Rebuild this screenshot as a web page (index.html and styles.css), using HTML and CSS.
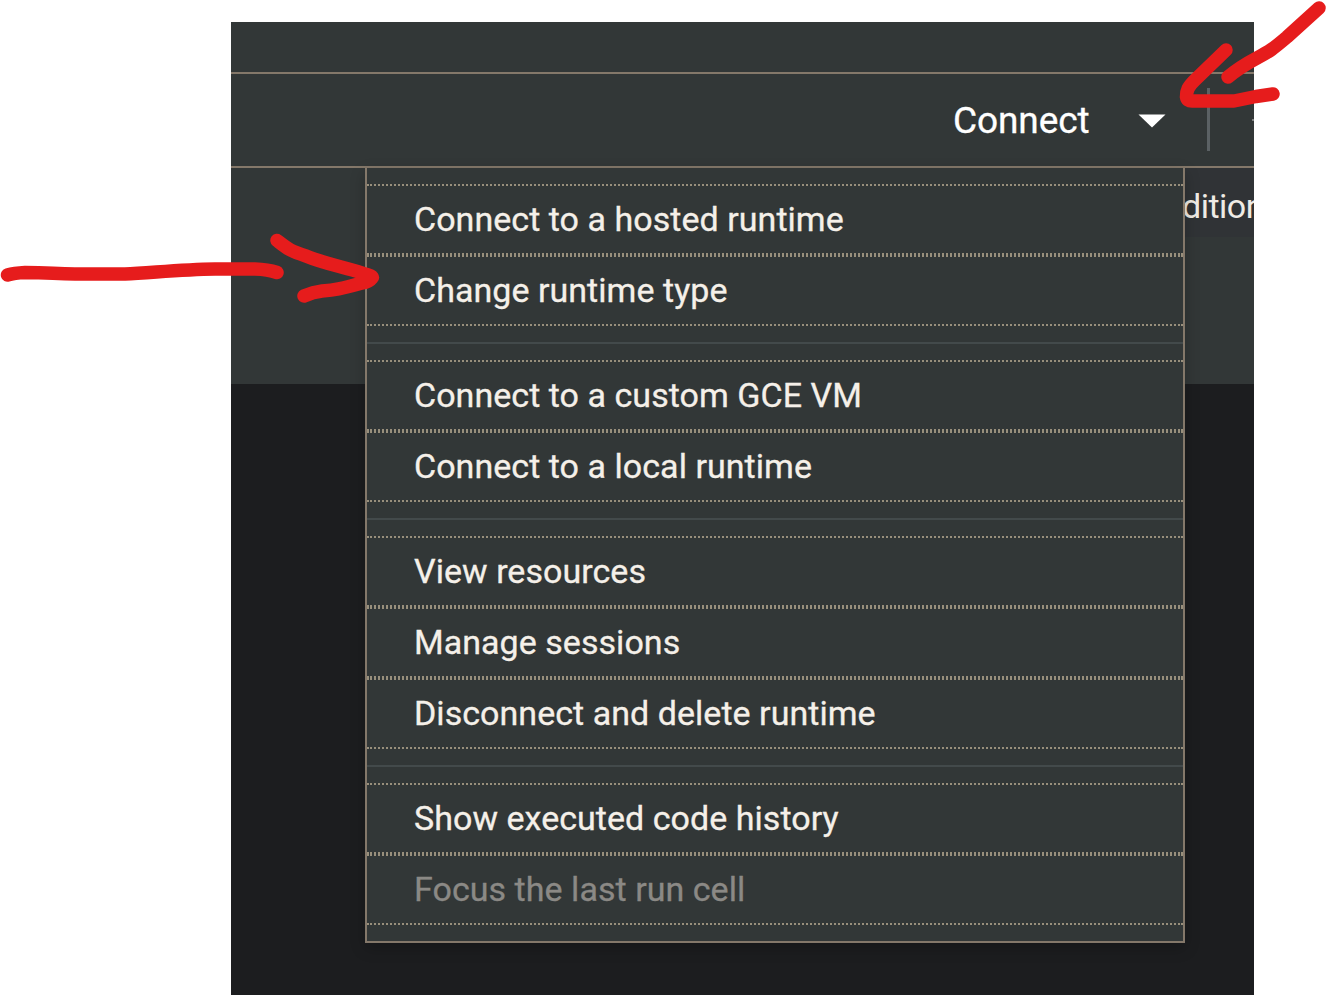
FILE: index.html
```html
<!DOCTYPE html>
<html lang="en">
<head>
<meta charset="utf-8">
<title>Runtime menu</title>
<link rel="stylesheet" href="styles.css">
</head>
<body>
<main class="app">
  <header class="topbar"></header>
  <div class="toolbar">
    <button class="connect">Connect</button>
    <svg class="caret" width="28" height="14" viewBox="0 0 28 14"><path d="M0.5 0.5H27.5L14 13.5Z" fill="#fff"/></svg>
    <span class="divider"></span>
    <span class="next"></span>
  </div>
  <section class="content">
    <span class="chip">dition</span>
    <ul class="menu">
      <li class="item">Connect to a hosted runtime</li>
      <li class="item">Change runtime type</li>
      <li class="separator"></li>
      <li class="item">Connect to a custom GCE VM</li>
      <li class="item">Connect to a local runtime</li>
      <li class="separator"></li>
      <li class="item">View resources</li>
      <li class="item">Manage sessions</li>
      <li class="item">Disconnect and delete runtime</li>
      <li class="separator"></li>
      <li class="item">Show executed code history</li>
      <li class="item disabled">Focus the last run cell</li>
    </ul>
  </section>
</main>
<svg class="marks" width="1327" height="995" viewBox="0 0 1327 995">
  <path d="M7.500 275Q14 273 25 272.500C50 272.500 55 274 75 274H125C150 273 180 269.500 215 269H255Q268 269.500 277 272.500"/>
  <path d="M277 240.500C288 249 290 251 306 256C325 264 345 267 362 273Q374 276 372 278Q369 282 362 283C340 289 335 290 322 291Q313 292 304 296"/>
  <path d="M1319 8L1287 37C1273 49 1270 51 1257 58Q1240 67 1228 77"/>
  <path d="M1226 50L1195 80C1188 87 1186.500 90 1186.500 97Q1187 101 1192 101H1234L1256 96.500L1273 94"/>
</svg>
</body>
</html>
```
FILE: styles.css
```css
* { box-sizing: border-box; }
body {
  margin: 0;
  height: 995px;
  overflow: hidden;
  background: #fff;
  font-family: Roboto, sans-serif;
}
.app {
  width: 1023px;
  height: 973px;
  margin: 22px 0 0 231px;
  overflow: hidden;
  background: #1c1d1f;
}
.topbar { height: 50px; background: #323737; }
.toolbar {
  display: flex;
  align-items: center;
  justify-content: flex-end;
  height: 96px;
  border-top: 2px solid #84786a;
  border-bottom: 2px solid #84786a;
  background: #323737;
}
.connect {
  width: 137px;
  margin-right: 48px;
  padding: 2px 0 0;
  border: 0;
  background: none;
  color: #fff;
  font: 400 37px/48px Roboto, sans-serif;
  letter-spacing: -.1px;
  text-align: left;
  white-space: nowrap;
  -webkit-text-stroke: .3px currentColor;
}
.caret { margin: 2px 41px 0 0; }
.divider { width: 3px; height: 63px; margin: 0 42px 1px 0; background: #5b6164; }
.next { width: 2px; height: 2px; background: #7e8182; }
.content {
  position: relative;
  display: flex;
  justify-content: flex-end;
  align-items: flex-start;
  height: 216px;
  background: #323737;
}
.chip {
  width: 72px;
  height: 69px;
  padding-top: 16px;
  background: #303336;
  color: #efebe5;
  font: 400 34px/44px Roboto, sans-serif;
  letter-spacing: -.5px;
  white-space: nowrap;
}
.menu {
  position: absolute;
  left: 134px;
  top: 0;
  width: 820px;
  margin: 0;
  padding: 16px 0;
  list-style: none;
  border: 2px solid #84786a;
  border-top: 0;
  background: #323737;
  box-shadow: 0 5px 14px rgba(0, 0, 0, .22);
}
.item {
  height: 71px;
  padding-left: 47px;
  border-top: 2px dotted #988f7c;
  border-bottom: 2px dotted #988f7c;
  color: #f5f0e9;
  font-size: 34px;
  line-height: 67px;
  letter-spacing: .04px;
  -webkit-text-stroke: .3px currentColor;
}
.disabled { color: #8b8985; }
.separator { height: 2px; margin: 16px 0; background: #434a4b; }
.marks {
  position: absolute;
  left: 0;
  top: 0;
  fill: none;
  stroke: #e61c1c;
  stroke-width: 13.500;
  stroke-linecap: round;
  stroke-linejoin: round;
}
```
